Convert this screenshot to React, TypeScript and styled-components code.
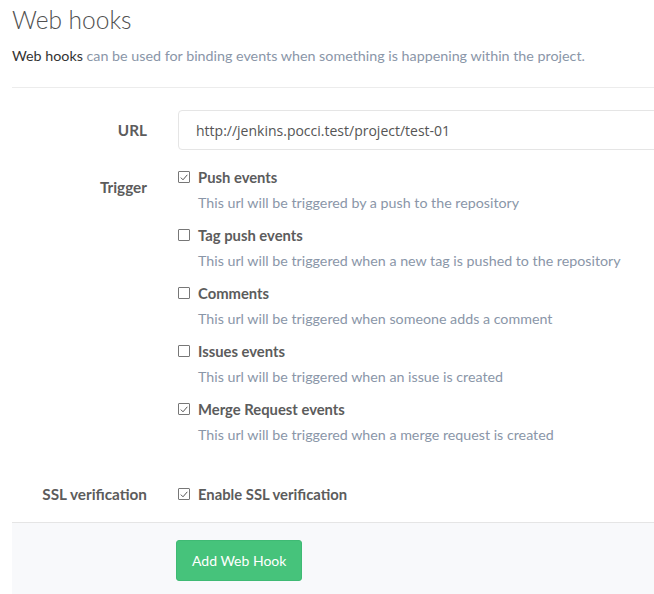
import React from "react";
import styled, { createGlobalStyle } from "styled-components";

const GlobalStyle = createGlobalStyle`
  body {
    margin: 0;
    background: #fff;
    font-family: "Lato", "Noto Sans", sans-serif;
    color: #5c5c5c;
    overflow: hidden;
  }
`;

const Page = styled.div`
  padding: 0 0 0 12px;
  width: 680px;
`;

const Title = styled.h3`
  margin: 0;
  padding-top: 4px;
  font-size: 24.5px;
  font-weight: 300;
  line-height: 32px;
  color: #505050;
`;

const Lead = styled.p`
  margin: 10px 0 0;
  font-size: 14.3px;
  line-height: 20px;
  color: #8a96a8;
  b {
    font-weight: 400;
    color: #333;
  }
`;

const Rule = styled.hr`
  margin: 21px 0 0;
  border: 0;
  border-top: 1px solid #ececec;
`;

const Form = styled.form`
  padding-top: 22px;
`;

const Row = styled.div<{ $gap?: number }>`
  display: grid;
  grid-template-columns: 166px 1fr;
  margin-bottom: ${(p) => p.$gap ?? 0}px;
`;

const Label = styled.label<{ $top?: number }>`
  padding-right: 31px;
  padding-top: ${(p) => p.$top ?? 0}px;
  text-align: right;
  font-size: 15.3px;
  font-weight: 700;
  line-height: 20px;
  color: #5c5c5c;
`;

const UrlInput = styled.input`
  box-sizing: border-box;
  height: 40px;
  width: 100%;
  padding: 0 17px;
  border: 1px solid #e5e5e5;
  border-radius: 4px;
  font-family: "Open Sans", "Liberation Sans", sans-serif;
  font-size: 14px;
  color: #555;
  outline: none;
`;

const Options = styled.div`
  display: flex;
  flex-direction: column;
  padding-top: 17px;
`;

const Option = styled.div`
  margin-bottom: 12px;
`;

const CheckLine = styled.label`
  display: flex;
  align-items: center;
  gap: 8px;
  height: 20px;
  font-size: 14.8px;
  font-weight: 700;
  color: #5c5c5c;
`;

const Box = styled.span`
  box-sizing: border-box;
  width: 12px;
  height: 12px;
  border: 1px solid #777;
  border-radius: 1px;
  display: inline-flex;
  align-items: center;
  justify-content: center;
  background: #fff;
`;

const Help = styled.p`
  margin: 6px 0 0 20px;
  font-size: 14.25px;
  line-height: 20px;
  color: #8a96a8;
`;

const Footer = styled.div`
  height: 73px;
  border-top: 1px solid #e5e5e5;
  background: #f8f9fb;
  padding-left: 164px;
  padding-top: 17px;
  box-sizing: border-box;
`;

const SaveButton = styled.button`
  height: 41px;
  padding: 0 15px;
  border: 1px solid #3fba74;
  border-radius: 3px;
  background: #46c37b;
  color: #fff;
  font-family: "Lato", sans-serif;
  font-size: 14px;
`;

const Check = ({ checked }: { checked: boolean }) => (
  <Box>
    {checked && (
      <svg width="8" height="7" viewBox="0 0 8 7">
        <path d="M0.8 3.6 L3 5.8 L7.3 0.8" fill="none" stroke="#555" strokeWidth="1" />
      </svg>
    )}
  </Box>
);

const triggers = [
  { name: "Push events", help: "This url will be triggered by a push to the repository", on: true },
  { name: "Tag push events", help: "This url will be triggered when a new tag is pushed to the repository", on: false },
  { name: "Comments", help: "This url will be triggered when someone adds a comment", on: false },
  { name: "Issues events", help: "This url will be triggered when an issue is created", on: false },
  { name: "Merge Request events", help: "This url will be triggered when a merge request is created", on: true },
];

export default function App() {
  return (
    <Page>
      <GlobalStyle />
      <Title>Web hooks</Title>
      <Lead>
        <b>Web hooks</b> can be used for binding events when something is happening within the project.
      </Lead>
      <Rule />
      <Form>
        <Row>
          <Label $top={10}>URL</Label>
          <UrlInput defaultValue="http://jenkins.pocci.test/project/test-01" />
        </Row>
        <Row $gap={27}>
          <Label $top={27}>Trigger</Label>
          <Options>
            {triggers.map((t) => (
              <Option key={t.name}>
                <CheckLine>
                  <Check checked={t.on} />
                  {t.name}
                </CheckLine>
                <Help>{t.help}</Help>
              </Option>
            ))}
          </Options>
        </Row>
        <Row $gap={18}>
          <Label>SSL verification</Label>
          <CheckLine>
            <Check checked />
            Enable SSL verification
          </CheckLine>
        </Row>
        <Footer>
          <SaveButton type="button">Add Web Hook</SaveButton>
        </Footer>
      </Form>
    </Page>
  );
}
